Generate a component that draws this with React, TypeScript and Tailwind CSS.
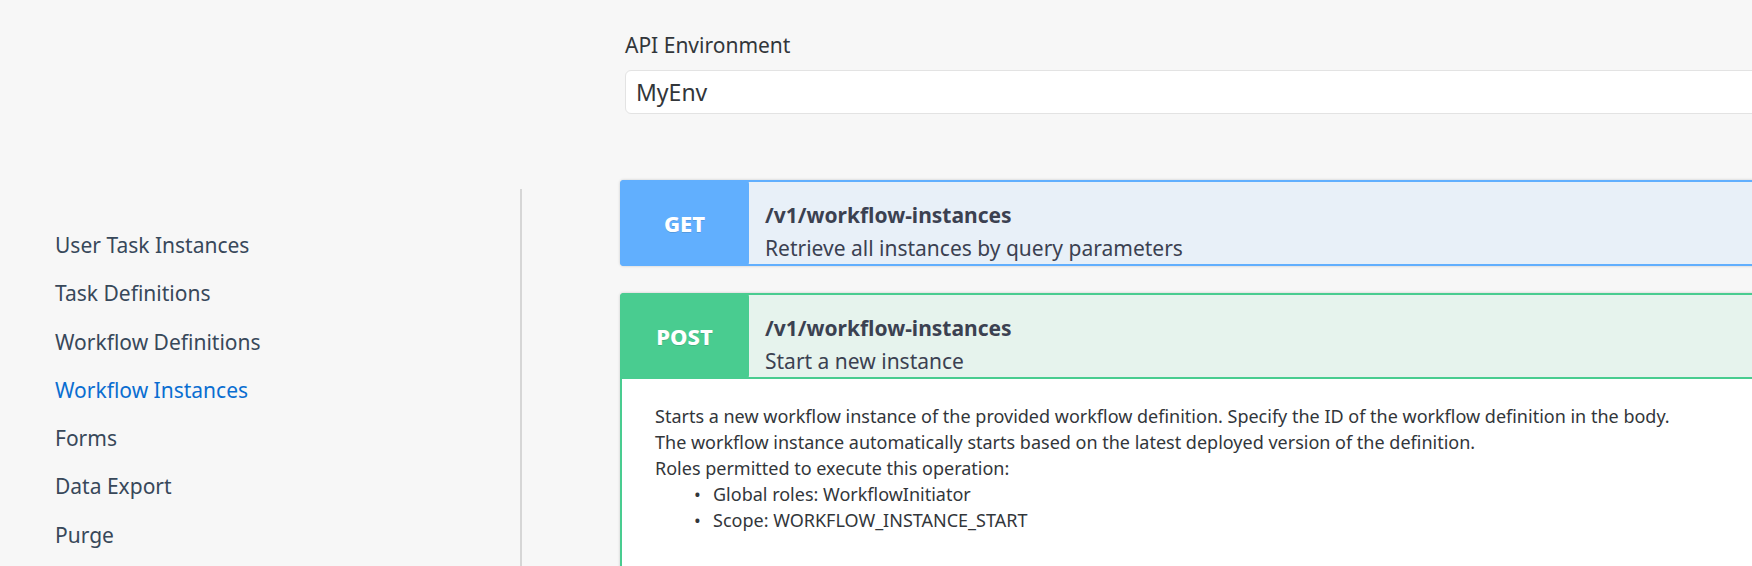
import React from "react";

const navItems = [
  "User Task Instances",
  "Task Definitions",
  "Workflow Definitions",
  "Workflow Instances",
  "Forms",
  "Data Export",
  "Purge",
];

function Summary({
  method,
  path,
  desc,
  badge,
}: {
  method: string;
  path: string;
  desc: string;
  badge: string;
}) {
  return (
    <div className="flex h-[82px]">
      <div
        className={`-my-[2px] -ml-[2px] flex w-[129px] shrink-0 items-center justify-center rounded-[4px] ${badge} text-[22px] font-extrabold text-white [text-shadow:0_1px_0_rgba(0,0,0,0.12)]`}
      >
        {method}
      </div>
      <div className="flex flex-col pl-[16px] pt-[17px] text-[#3b4151]">
        <div className="text-[21px] font-bold leading-[33px]">{path}</div>
        <div className="text-[21px] leading-[33px]">{desc}</div>
      </div>
    </div>
  );
}

export default function App() {
  return (
    <div className="h-[566px] w-full overflow-hidden bg-[#f7f7f7] font-['Noto_Sans',sans-serif]">
      <div className="-mr-6 pl-[625px] pt-[31px]">
        <div className="mb-[11px] text-[21px] leading-[28px] text-[#32363a]">
          API Environment
        </div>
        <div className="flex h-[44px] items-center rounded-[6px] border border-[#e3e3e3] bg-white pl-[10px] text-[23px] text-[#32363a]">
          MyEnv
        </div>
      </div>

      <div className="mt-[66px] flex">
        <aside className="mt-[9px] h-[400px] w-[522px] shrink-0 border-r-2 border-[#d6d6d6] pl-[55px] pt-[32px]">
          <nav className="flex flex-col">
            {navItems.map((item) => (
              <a
                key={item}
                className={`text-[21px] leading-[48.3px] ${
                  item === "Workflow Instances"
                    ? "text-[#0a6ed1]"
                    : "text-[#38485a]"
                }`}
              >
                {item}
              </a>
            ))}
          </nav>
        </aside>

        <main className="-mr-6 flex-1 pl-[98px]">
          <div className="rounded-[4px] border-2 border-[#61affe] bg-[#e8f0f8] shadow-[0_0_3px_rgba(0,0,0,0.19)]">
            <Summary
              method="GET"
              path="/v1/workflow-instances"
              desc="Retrieve all instances by query parameters"
              badge="bg-[#61affe]"
            />
          </div>

          <div className="mt-[27px] rounded-[4px] border-2 border-[#49cc90] bg-[#e6f3ed] shadow-[0_0_3px_rgba(0,0,0,0.19)]">
            <Summary
              method="POST"
              path="/v1/workflow-instances"
              desc="Start a new instance"
              badge="bg-[#49cc90]"
            />
            <div className="h-[300px] border-t-2 border-[#49cc90] bg-white pl-[33px] pt-[24px] text-[18px] leading-[26px] text-[#32363a]">
              <div>
                Starts a new workflow instance of the provided workflow
                definition. Specify the ID of the workflow definition in the
                body.
              </div>
              <div>
                The workflow instance automatically starts based on the latest
                deployed version of the definition.
              </div>
              <div>Roles permitted to execute this operation:</div>
              <ul className="pl-[39px]">
                <li className="flex">
                  <span className="w-[19px] shrink-0">•</span>
                  <span>Global roles: WorkflowInitiator</span>
                </li>
                <li className="flex">
                  <span className="w-[19px] shrink-0">•</span>
                  <span>Scope: WORKFLOW_INSTANCE_START</span>
                </li>
              </ul>
            </div>
          </div>
        </main>
      </div>
    </div>
  );
}
